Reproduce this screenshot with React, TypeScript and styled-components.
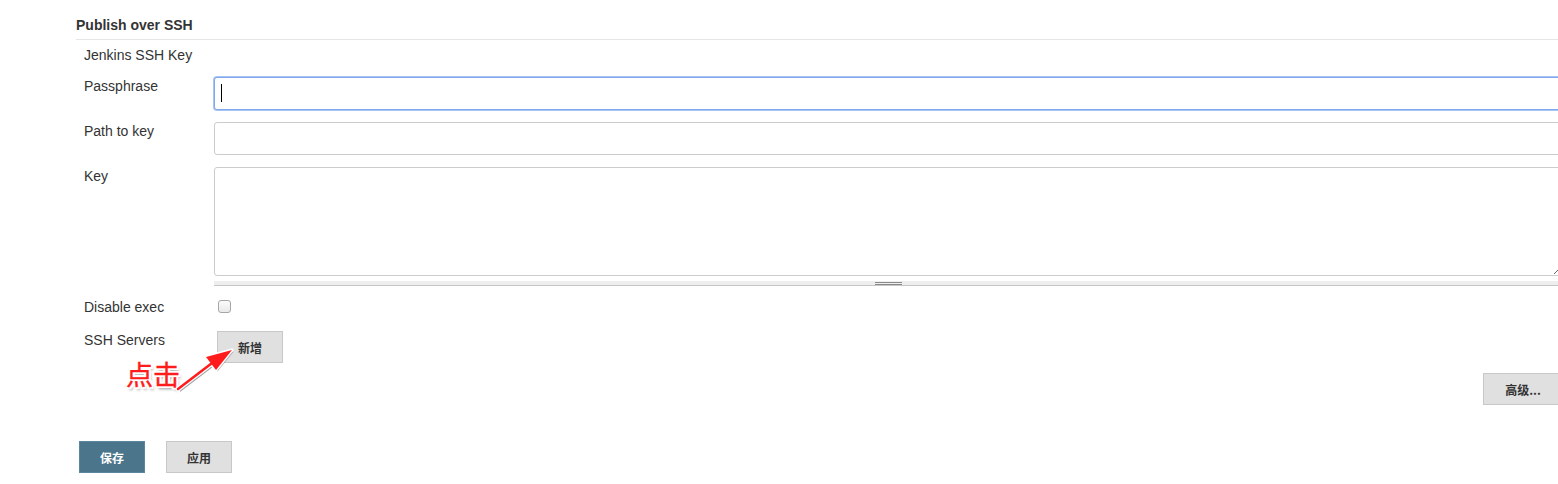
import React from "react";
import styled, { createGlobalStyle } from "styled-components";

const Global = createGlobalStyle`
  html, body { margin: 0; padding: 0; background: #fff; overflow: hidden; }
  body { font-family: "Liberation Sans", Arial, "Noto Sans CJK SC", sans-serif; color: #333; }
`;

const Page = styled.div`
  position: relative;
  width: 1487px;
  padding: 15px 0 0 76px;
`;

const SectionHeader = styled.div`
  font-size: 14px;
  font-weight: bold;
  line-height: 20px;
  color: #333;
  padding-bottom: 4px;
  border-bottom: 1px solid #e5e5e5;
`;

const Form = styled.div`
  padding-left: 8px;
  display: flex;
  flex-direction: column;
`;

const Row = styled.div<{ $mt: number }>`
  display: grid;
  grid-template-columns: 130px 1fr;
  margin-top: ${(p) => p.$mt}px;
`;

const Label = styled.div<{ $lh?: number }>`
  font-size: 14px;
  line-height: ${(p) => p.$lh ?? 18}px;
  color: #333;
`;

const FieldWrap = styled.div`
  position: relative;
`;

const TextInput = styled.input<{ $focus?: boolean }>`
  box-sizing: border-box;
  display: block;
  width: 100%;
  height: 33px;
  margin: 0;
  padding: 0 6px;
  font-size: 14px;
  border-radius: 3px;
  border: 1px solid ${(p) => (p.$focus ? "#7ea7ee" : "#cccccc")};
  box-shadow: ${(p) => (p.$focus ? "0 0 0 1px #a9c4f3" : "none")};
  outline: none;
  background: #fff;
`;

const Caret = styled.span`
  position: absolute;
  left: 7px;
  top: 7px;
  width: 1px;
  height: 18px;
  background: #000;
`;

const TextArea = styled.textarea`
  box-sizing: border-box;
  display: block;
  width: 100%;
  height: 109px;
  margin: 0;
  border-radius: 3px;
  border: 1px solid #cccccc;
  resize: vertical;
  outline: none;
  font-family: "Liberation Mono", monospace;
`;

const Handle = styled.div`
  margin-top: 5px;
  height: 4px;
  background: #eeeeee;
  border-bottom: 1px solid #c6c6c6;
  display: flex;
  justify-content: center;
  align-items: center;
`;

const Grip = styled.div`
  width: 27px;
  height: 3px;
  border-top: 1px solid #8a8a8a;
  border-bottom: 1px solid #8a8a8a;
  box-sizing: border-box;
  margin-top: 1px;
`;

const Check = styled.span`
  display: block;
  box-sizing: border-box;
  width: 13px;
  height: 13px;
  margin: 3px 0 0 4px;
  border: 1px solid #a6a6a6;
  border-radius: 3px;
  background: linear-gradient(#fcfcfc, #e9e9e9);
`;

const Button = styled.button<{ $primary?: boolean; $w: number }>`
  box-sizing: border-box;
  width: ${(p) => p.$w}px;
  height: 32px;
  margin: 0;
  padding: 0;
  font-family: "Noto Sans CJK SC", "Liberation Sans", sans-serif;
  font-size: 12px;
  font-weight: bold;
  color: ${(p) => (p.$primary ? "#ffffff" : "#333333")};
  background: ${(p) => (p.$primary ? "#4b758b" : "#e0e0e0")};
  border: 1px solid ${(p) => (p.$primary ? "#5b879e" : "#c8c8c8")};
  border-radius: 0;
`;

const ServerCell = styled.div`
  padding-left: 3px;
`;

const AdvancedRow = styled.div`
  display: flex;
  justify-content: flex-end;
  margin-top: 10px;
`;

const BottomBar = styled.div`
  display: flex;
  gap: 21px;
  margin: 36px 0 0 3px;
`;

const Annotation = styled.div`
  position: absolute;
  left: 126px;
  top: 356px;
  font-family: "Noto Sans CJK SC", sans-serif;
  font-size: 27px;
  font-weight: 400;
  line-height: 36px;
  color: #ff1c1c;
  -webkit-text-stroke: 0.4px #ff1c1c;
  text-shadow: -2px -2px 0 #fff, 2px -2px 0 #fff, -2px 2px 0 #fff, 2px 2px 0 #fff,
    0 2px 0 #fff, 2px 0 0 #fff, -2px 0 0 #fff, 0 -2px 0 #fff, 2px 3px 3px rgba(0, 0, 0, 0.45);
`;

const ArrowSvg = styled.svg`
  position: absolute;
  left: 170px;
  top: 342px;
  overflow: visible;
`;

export default function App() {
  return (
    <>
      <Global />
      <Page>
        <SectionHeader>Publish over SSH</SectionHeader>
        <Form>
          <Row $mt={5}>
            <Label $lh={20}>Jenkins SSH Key</Label>
            <div />
          </Row>
          <Row $mt={12}>
            <Label>Passphrase</Label>
            <FieldWrap>
              <TextInput $focus type="text" readOnly />
              <Caret />
            </FieldWrap>
          </Row>
          <Row $mt={12}>
            <Label>Path to key</Label>
            <TextInput type="text" readOnly />
          </Row>
          <Row $mt={12}>
            <Label>Key</Label>
            <div>
              <TextArea readOnly />
              <Handle>
                <Grip />
              </Handle>
            </div>
          </Row>
          <Row $mt={11}>
            <Label $lh={20}>Disable exec</Label>
            <div>
              <Check />
            </div>
          </Row>
          <Row $mt={14}>
            <Label>SSH Servers</Label>
            <ServerCell>
              <Button $w={66}>新增</Button>
            </ServerCell>
          </Row>
          <AdvancedRow>
            <Button $w={80}>高级...</Button>
          </AdvancedRow>
        </Form>
        <BottomBar>
          <Button $primary $w={66}>保存</Button>
          <Button $w={66}>应用</Button>
        </BottomBar>
        <Annotation>点击</Annotation>
        <ArrowSvg width="70" height="60" viewBox="0 0 70 60">
          <g transform="translate(1.5,1.5)" opacity="0.35">
            <line x1="8" y1="47" x2="46" y2="18" stroke="#000" strokeWidth="3" />
            <polygon points="62,8 36,15 46,28" fill="#000" />
          </g>
          <line x1="8" y1="47" x2="46" y2="18" stroke="#fff" strokeWidth="5" strokeLinecap="round" />
          <polygon points="62,8 36,15 46,28" fill="#fff" stroke="#fff" strokeWidth="3" strokeLinejoin="round" />
          <line x1="8" y1="47" x2="46" y2="18" stroke="#ff1c1c" strokeWidth="2.5" strokeLinecap="round" />
          <polygon points="62,8 36,15 46,28" fill="#ff1c1c" />
        </ArrowSvg>
      </Page>
    </>
  );
}
